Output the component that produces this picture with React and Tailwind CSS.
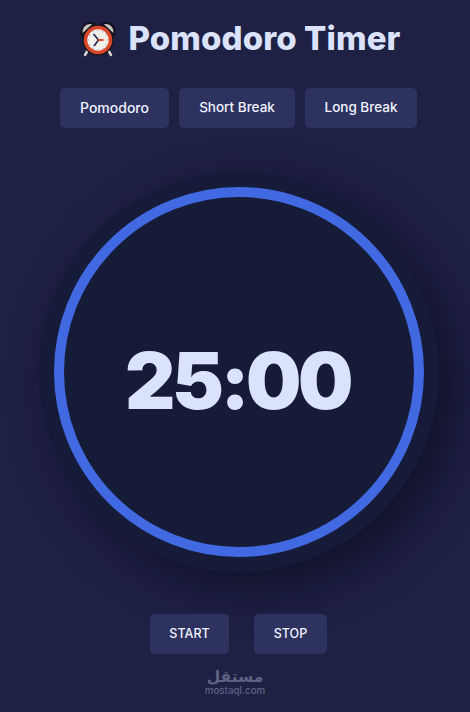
const sans = "font-['Inter','Liberation_Sans',sans-serif]";

function Clock() {
  const dots = Array.from({ length: 12 }, (_, i) => i * 30);
  return (
    <svg width="38" height="38" viewBox="0 0 38 38" className="shrink-0">
      <path d="M3 15 C1 6 8 1 15 4 Z" fill="#c9c3bd" stroke="#14121c" strokeWidth="2" />
      <path d="M35 15 C37 6 30 1 23 4 Z" fill="#c9c3bd" stroke="#14121c" strokeWidth="2" />
      <path d="M9 30 L6 35 M29 30 L32 35" stroke="#d8d4d0" strokeWidth="2.500" strokeLinecap="round" />
      <circle cx="19" cy="20" r="15.500" fill="#14121c" />
      <circle cx="19" cy="20" r="12.500" fill="#f2efec" stroke="#d9472b" strokeWidth="3.600" />
      {dots.map((a) => (
        <circle
          key={a}
          cx={19 + 9.5 * Math.cos((a * Math.PI) / 180)}
          cy={20 + 9.5 * Math.sin((a * Math.PI) / 180)}
          r="0.8"
          fill="#b9b5b5"
        />
      ))}
      <path d="M14.500 14 L19.500 20 L15 26" fill="none" stroke="#2b2c50" strokeWidth="1.800" />
      <path d="M19 20 L24.500 20" stroke="#e2452a" strokeWidth="2" />
    </svg>
  );
}

function Btn({ children, className }) {
  return (
    <button className={`h-10 rounded-[5px] bg-[#2e325f] font-medium text-[#f1f3ff] ${className}`}>
      {children}
    </button>
  );
}

export default function App() {
  return (
    <div className={`${sans} flex h-[712px] w-[470px] flex-col items-center overflow-hidden bg-[#1e2044]`}>
      <div className="mt-[19px] flex h-10 items-center gap-[11px] pl-[10px]">
        <Clock />
        <h1 className="text-[33px] font-extrabold tracking-[0.1px] whitespace-nowrap text-[#dbe3fc]">Pomodoro Timer</h1>
      </div>
      <div className="mt-[29px] ml-[7px] flex gap-[10px]">
        <Btn className="w-[109px] pb-[2px] text-[14px]">Pomodoro</Btn>
        <Btn className="w-[116px] pb-[2px] text-[13.500px]">Short Break</Btn>
        <Btn className="w-[112px] pb-[2px] text-[13.500px]">Long Break</Btn>
      </div>
      <div className="mt-[59px] ml-[7px] flex h-[370px] w-[370px] items-center justify-center rounded-full border-[10px] border-[#4169e1] bg-[#161b38] shadow-[0_0_0_15px_#171b3a,16px_16px_45px_15px_#101329]">
        <span className="pt-[18px] pr-[2px] text-[78px] leading-none font-black tracking-[-3.500px] text-[#dbe3fc]">25:00</span>
      </div>
      <div className="mt-[57px] ml-[7px] flex gap-[25px]">
        <Btn className="w-[79px] text-[12.500px]">START</Btn>
        <Btn className="w-[73px] text-[12.500px]">STOP</Btn>
      </div>
      <div className="mt-[15px] flex flex-col items-center text-[#5f6385]">
        <span dir="rtl" className="font-['DejaVu_Sans',sans-serif] text-[15.500px] leading-[16px] font-bold">مستقل</span>
        <span className="text-[9.800px] leading-[11px] font-medium">mostaql.com</span>
      </div>
    </div>
  );
}
